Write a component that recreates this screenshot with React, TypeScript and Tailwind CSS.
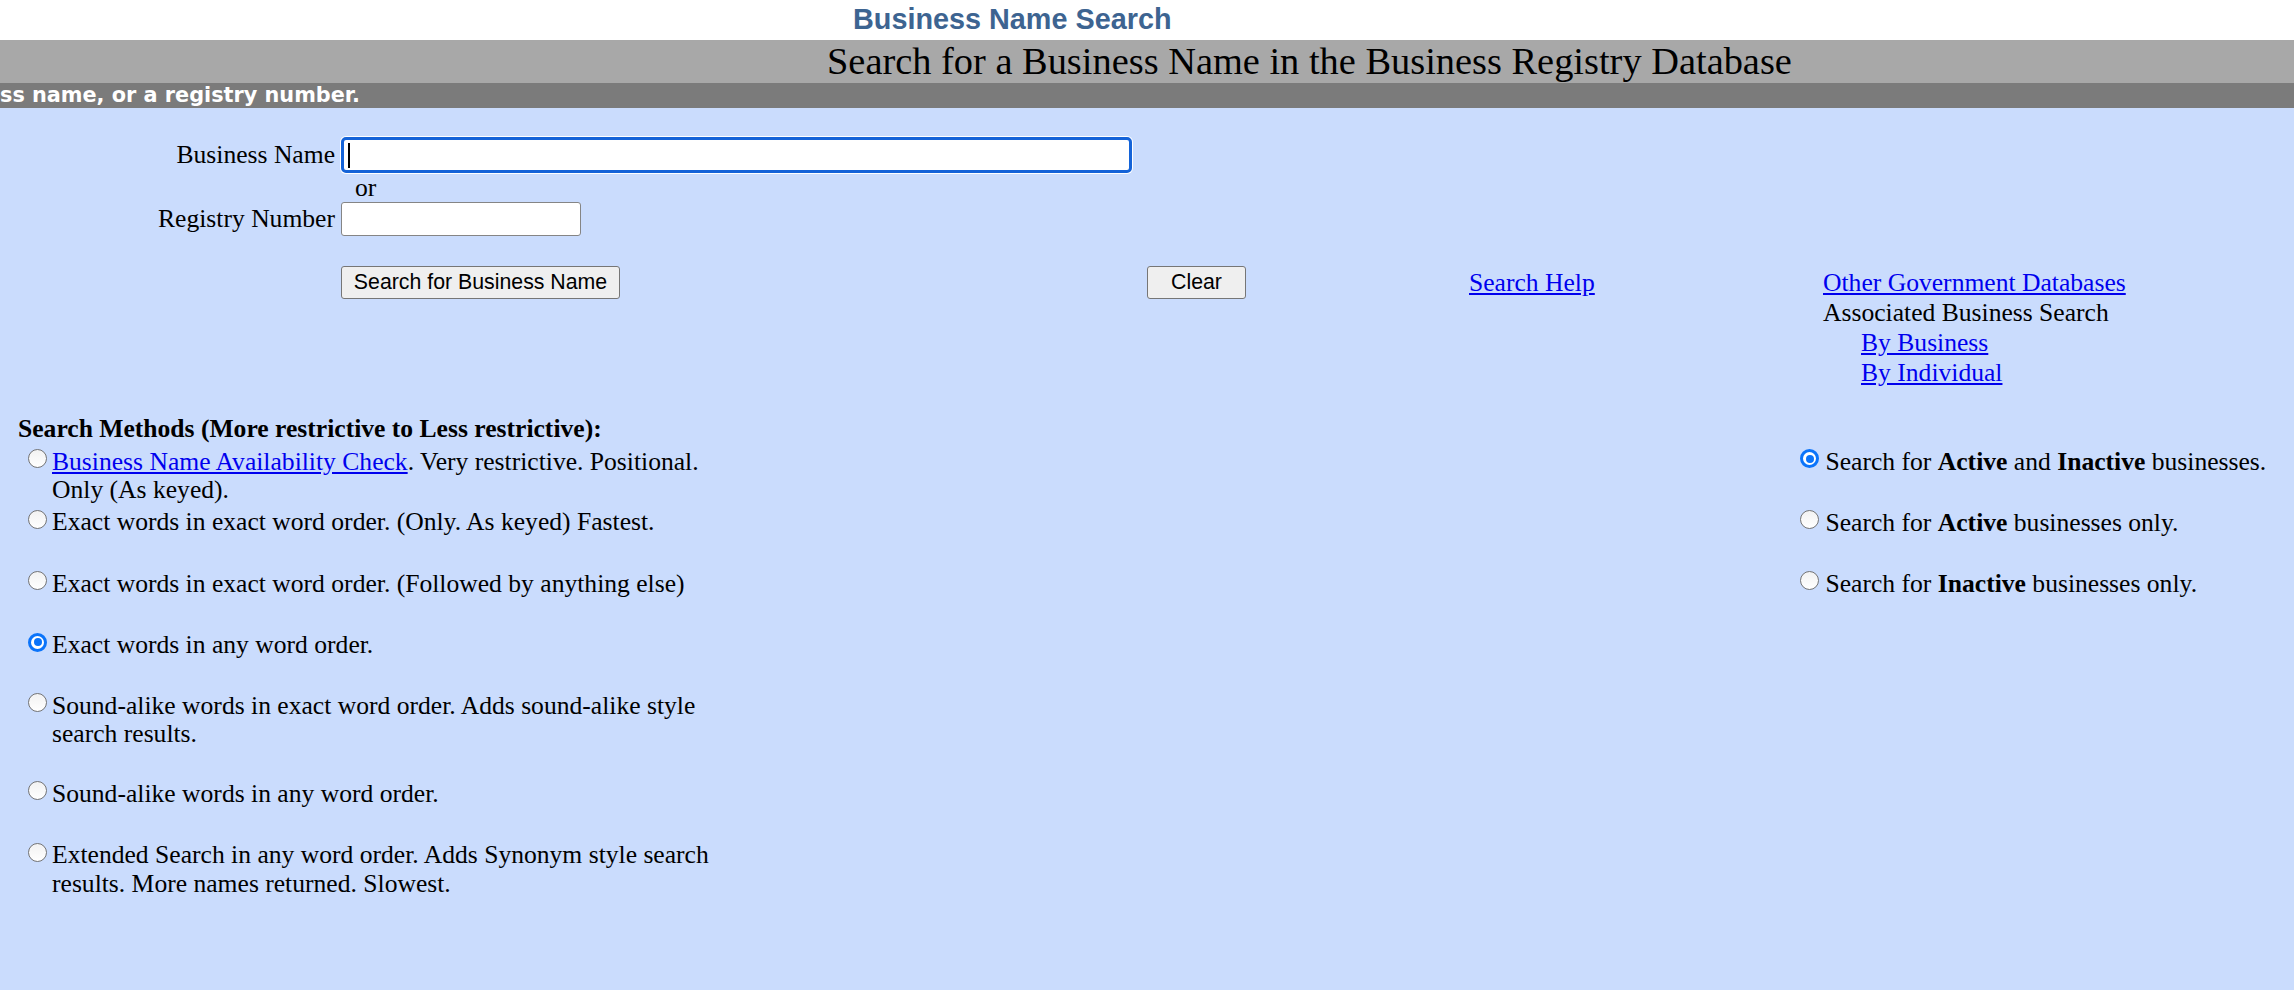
import React from "react";

type RadioProps = { checked?: boolean };

// Browser-style radio control drawn with CSS circles.
function Radio({ checked }: RadioProps) {
  if (checked) {
    return (
      <span className="flex h-[19px] w-[19px] shrink-0 items-center justify-center rounded-full border-[3px] border-[#0b74fa] bg-white">
        <span className="block h-[8px] w-[8px] rounded-full bg-[#0b74fa]" />
      </span>
    );
  }
  return (
    <span className="block h-[19px] w-[19px] shrink-0 rounded-full border-[1.5px] border-[#747474] bg-[linear-gradient(#f2f2f2,#ffffff)]" />
  );
}

type MethodProps = {
  checked?: boolean;
  spacing: string;
  children: React.ReactNode;
};

function Method({ checked, spacing, children }: MethodProps) {
  return (
    <div className={`flex ${spacing}`}>
      <span className="ml-[10px] mt-[1.5px]">
        <Radio checked={checked} />
      </span>
      <div className="ml-[5px] w-[680px] leading-[28.5px]">{children}</div>
    </div>
  );
}

type StatusProps = {
  checked?: boolean;
  spacing: string;
  children: React.ReactNode;
};

function Status({ checked, spacing, children }: StatusProps) {
  return (
    <div className={`flex ${spacing}`}>
      <span className="mt-[1.5px]">
        <Radio checked={checked} />
      </span>
      <div className="ml-[6.5px] whitespace-nowrap leading-[28.5px]">{children}</div>
    </div>
  );
}

const buttonClass =
  "block h-[33px] rounded-[3px] border-[1.5px] border-[#767676] bg-[#efefef] pb-[4px] font-['Liberation_Sans',Arial,sans-serif] text-[21.3px] leading-normal text-black";

export default function App() {
  return (
    <div className="min-h-[990px] w-full overflow-hidden bg-[#cadcfd] font-['Liberation_Serif','Times_New_Roman',serif] text-[25.6px] text-black">
      {/* Page title */}
      <div className="h-[40px] whitespace-nowrap bg-white pl-[853px] font-['Liberation_Sans',Arial,sans-serif] text-[28.8px] font-bold leading-[38px] text-[#3d6491]">
        Business Name Search
      </div>

      {/* Section banner */}
      <div className="h-[43px] whitespace-nowrap bg-[#a8a8a8] pl-[827px] text-[38.4px] leading-[43px]">
        Search for a Business Name in the Business Registry Database
      </div>

      {/* Scrolling instruction strip */}
      <div className="h-[25px] overflow-hidden whitespace-nowrap bg-[#7b7b7b] font-['DejaVu_Sans',Verdana,sans-serif] text-[20.8px] font-bold leading-[25px] text-white">
        ss name, or a registry number.
      </div>

      {/* Search form */}
      <div className="pt-[29px]">
        <div className="flex h-[36px] items-center">
          <div className="w-[341px] shrink-0 pr-[6px] text-right">Business Name</div>
          <div className="relative h-[36px] w-[791px] rounded-[5px] border-[3px] border-[#1463d8] bg-white shadow-[0_0_0_1px_#ffffff]">
            <input
              aria-label="Business Name"
              className="h-full w-full bg-transparent px-[4px] outline-none"
            />
            <span className="absolute left-[4px] top-[3px] h-[24.6px] w-[2px] bg-black" />
          </div>
        </div>

        <div className="h-[29px] pl-[355px] leading-[29px]">or</div>

        <div className="flex h-[34px] items-center">
          <div className="w-[341px] shrink-0 pr-[6px] text-right">Registry Number</div>
          <input
            aria-label="Registry Number"
            className="h-[34px] w-[240px] rounded-[3px] border border-[#858585] bg-white px-[4px] outline-none"
          />
        </div>

        <div className="mt-[29.5px] grid grid-cols-[341px_806px_322px_354px_1fr] items-start">
          <div />
          <div>
            <button type="button" className={`${buttonClass} w-[279px]`}>
              Search for Business Name
            </button>
          </div>
          <div>
            <button type="button" className={`${buttonClass} w-[99px]`}>
              Clear
            </button>
          </div>
          <div className="mt-[2.1px] leading-[30px]">
            <a href="#" className="text-[#0000ee] underline">
              Search Help
            </a>
          </div>
          <div className="mt-[2.1px] whitespace-nowrap leading-[30px]">
            <div>
              <a href="#" className="text-[#0000ee] underline">
                Other Government Databases
              </a>
            </div>
            <div>Associated Business Search</div>
            <div className="pl-[38px]">
              <a href="#" className="text-[#0000ee] underline">
                By Business
              </a>
            </div>
            <div className="pl-[38px]">
              <a href="#" className="text-[#0000ee] underline">
                By Individual
              </a>
            </div>
          </div>
        </div>
      </div>

      {/* Search options */}
      <div className="mt-[26.6px] flex">
        <div className="w-[1800px] shrink-0 pl-[18px]">
          <div className="whitespace-nowrap font-bold leading-[30px]">
            Search Methods (More restrictive to Less restrictive):
          </div>
          <Method spacing="mt-[3.45px]">
            <a href="#" className="text-[#0000ee] underline">
              Business Name Availability Check
            </a>
            . Very restrictive. Positional. Only (As keyed).
          </Method>
          <Method spacing="mt-[3.5px]">
            Exact words in exact word order. (Only. As keyed) Fastest.
          </Method>
          <Method spacing="mt-[33px]">
            Exact words in exact word order. (Followed by anything else)
          </Method>
          <Method checked spacing="mt-[33px]">
            Exact words in any word order.
          </Method>
          <Method spacing="mt-[32px]">
            Sound-alike words in exact word order. Adds sound-alike style search results.
          </Method>
          <Method spacing="mt-[31px]">Sound-alike words in any word order.</Method>
          <Method spacing="mt-[33px]">
            Extended Search in any word order. Adds Synonym style search results. More names
            returned. Slowest.
          </Method>
        </div>

        <div className="pt-[33.45px]">
          <Status checked spacing="mt-0">
            Search for <b>Active</b> and <b>Inactive</b> businesses.
          </Status>
          <Status spacing="mt-[32.5px]">
            Search for <b>Active</b> businesses only.
          </Status>
          <Status spacing="mt-[32.5px]">
            Search for <b>Inactive</b> businesses only.
          </Status>
        </div>
      </div>
    </div>
  );
}
